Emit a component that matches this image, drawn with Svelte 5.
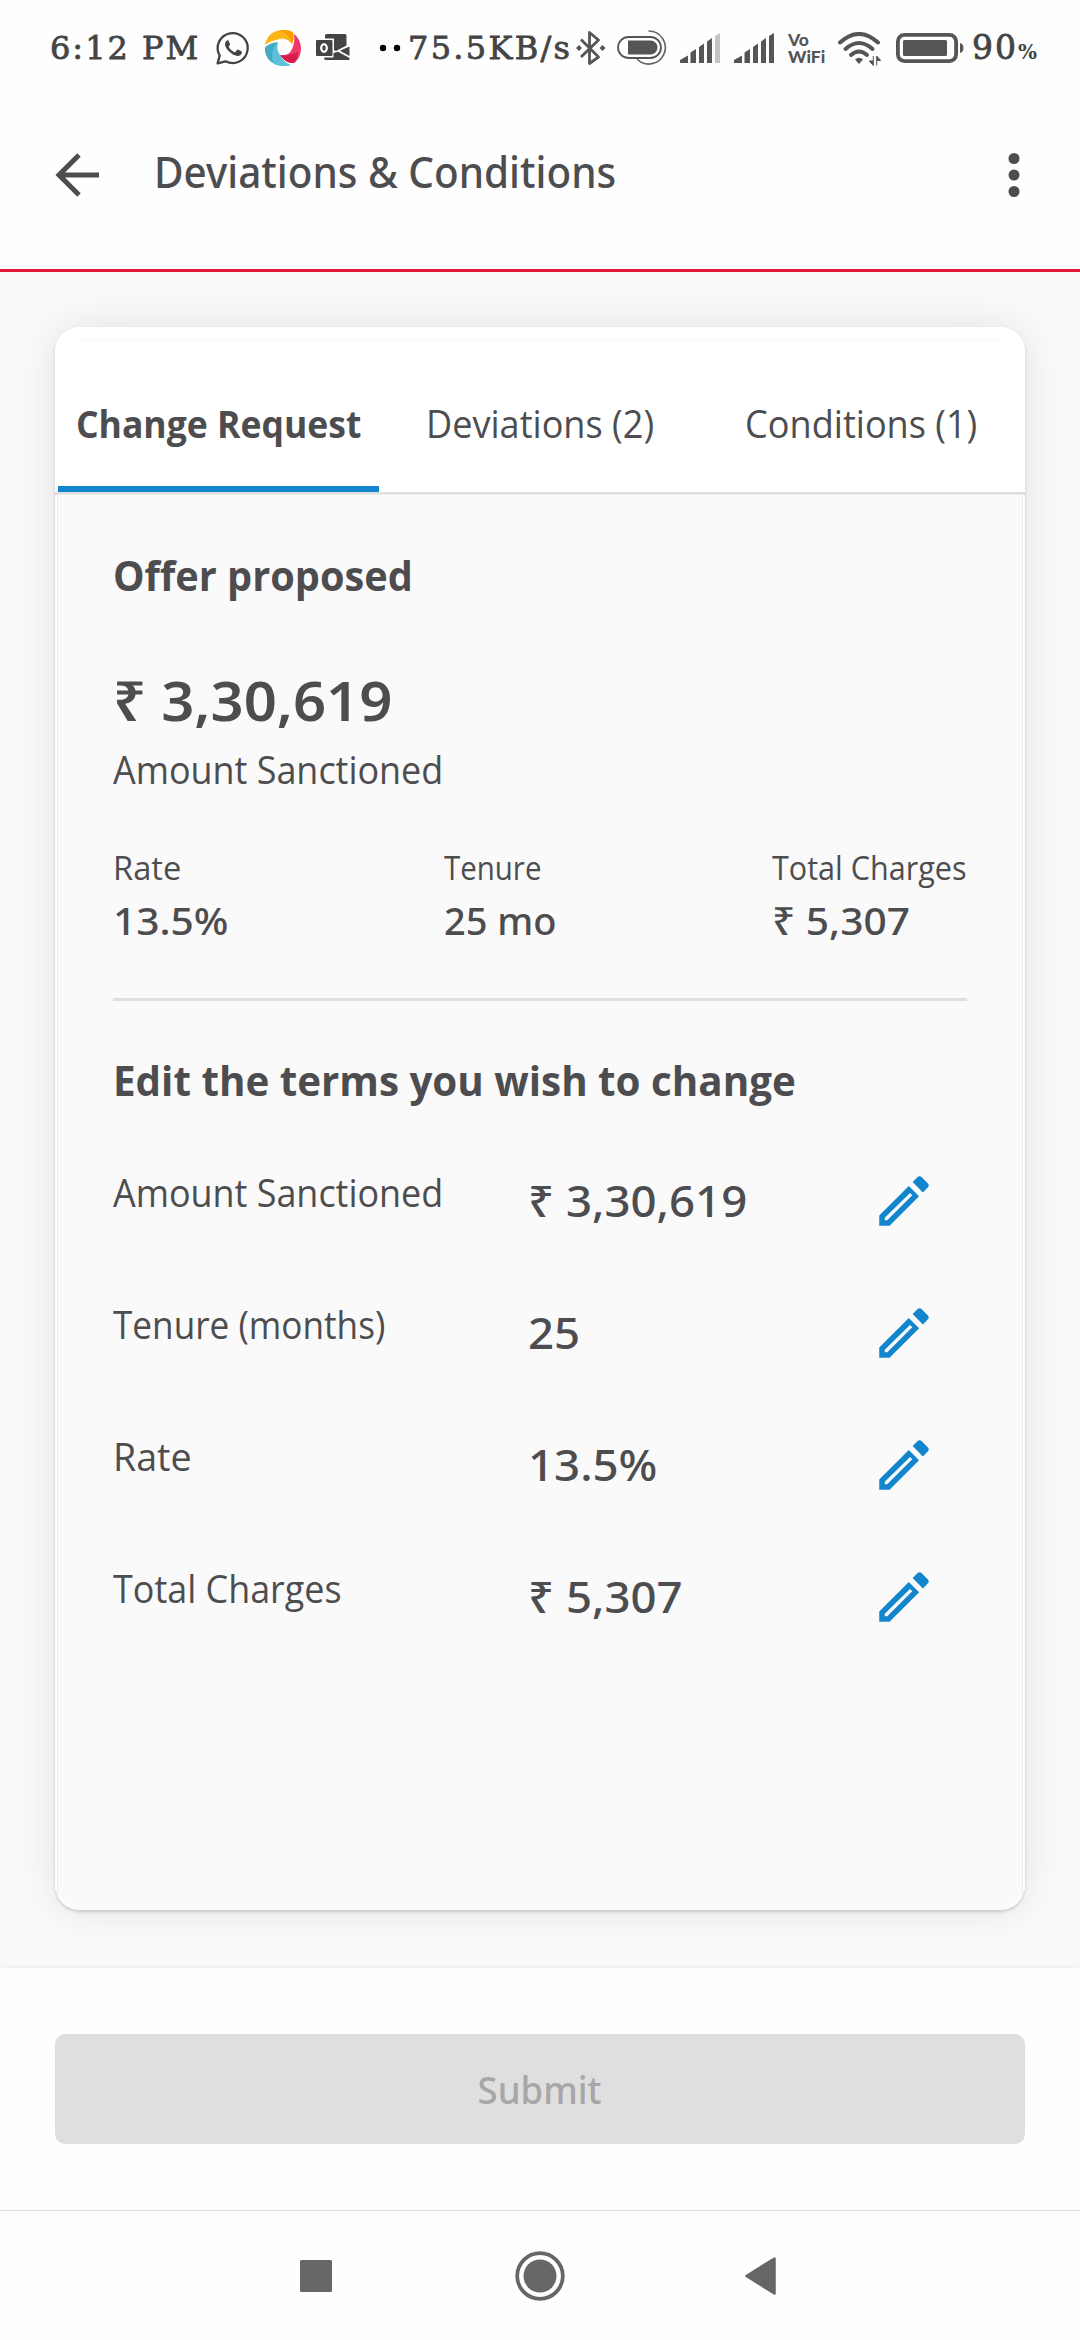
<script>
  const tabs = ['Change Request', 'Deviations (2)', 'Conditions (1)'];
  const summary = [
    { label: 'Rate', value: '13.5%', fit: 'open', kind: 'wide' },
    { label: 'Tenure', value: '25 mo', fit: 'tight', kind: '' },
    { label: 'Total Charges', value: '₹ 5,307', fit: '', kind: 'wide' }
  ];
  const terms = [
    { label: 'Amount Sanctioned', value: '₹ 3,30,619', fit: '' },
    { label: 'Tenure (months)', value: '25', fit: 'tight' },
    { label: 'Rate', value: '13.5%', fit: 'open' },
    { label: 'Total Charges', value: '₹ 5,307', fit: '' }
  ];
  let active = $state(0);
</script>

<div class="screen">
  <div class="status">
    <span class="clock">6:12 PM</span>
    <svg class="wa" viewBox="0 0 34 34" width="34" height="34">
      <path d="M1.6 32.4 3.7 24.6A15 15 0 1 1 9.6 30.3Z" fill="none" stroke="#444" stroke-width="2.3" stroke-linejoin="round" />
      <path d="M11.6 9.2c-.7 0-2.6 1.500-2.600 4 0 2.600 2 5.200 4.200 7.400 2.700 2.600 5.500 4.400 8.400 4.400 2.300 0 4.200-1.500 4.300-3.800 0-.6-.3-.8-3.600-2.400-.8-.4-1-.2-1.500.4l-1.400 1.700c-.4.400-.8.300-1.300.1-2.200-.9-4.100-2.700-5.200-4.900-.2-.5 0-.7.300-1.100.7-.8 1-1.200.8-1.900l-1.400-3.300c-.2-.5-.5-.6-1-.6Z" fill="#444" />
    </svg>
    <svg class="swirl" viewBox="0 0 36 36" width="36" height="36">
      <path d="M0 15C2 5 9 0 18 0c5 0 8 1 10 2.500 1 4 .5 8-1 11.500-3-4-7-6-12-5C9 10 4 12 0 15Z" fill="#fdb515" />
      <path d="M14 0h5c5 0 7 1 9 2.500 1 4 .5 8-1 11.500-1-5-5-11-13-14Z" fill="#fb9c00" />
      <path d="M29 4c5 4 7 9 7 15-.5 7-3 11-7 14-5 .5-10-2-14-8 6 1 10-1 12-6 2-5 3-9 2-15Z" fill="#f0386b" />
      <path d="M33 22c-5 3-12 4-18 3 4 6 9 8.500 14 8 3-3 4-6 4-11Z" fill="#d91a4c" />
      <path d="M0 17c3-3 8-5 13-4.500-1.500 6 0 10 3 14 2 4 5 6.500 10 8.500-4 1.500-11 1.500-16-.5C4 31 0 25 0 17Z" fill="#5cc0da" />
      <path d="M0 19c3-4 8-6.500 13-6.500C8 17 6 23 8 33 3 30 0 25 0 19Z" fill="#45a9c4" />
    </svg>
    <svg class="outlook" viewBox="0 0 34 27" width="34" height="27" fill="#444">
      <path d="M10.500 0H29q1.500 0 1.500 1.500V11.500L20 17l-2-1V4.500H9V1.500Q9 0 10.500 0Z" />
      <path d="M33.500 12.500V22L24 16.800ZM8 23.500h9.500V19L22 17.800 33.500 24v2H10q-2 0-2-2.500Z" />
      <rect y="6" width="16.500" height="16" rx="1" />
      <ellipse cx="8" cy="14" rx="2.800" ry="3.800" fill="none" stroke="#fff" stroke-width="2.200" />
    </svg>
    <svg class="dots" viewBox="0 0 22 8" width="22" height="8"><circle cx="4" cy="4" r="3.200" /><circle cx="18" cy="4" r="3.200" /></svg>
    <span class="speed">75.5KB/s</span>
    <svg class="bt" viewBox="0 0 30 34" width="30" height="34">
      <path d="M5 8.500 22.500 26 13.500 32.500V1.500L22.500 9 5 26" fill="none" stroke="#555" stroke-width="2.800" stroke-linejoin="round" />
      <path d="M3 14l3 3-3 3-3-3ZM26.500 14l3 3-3 3-3-3Z" fill="#555" />
    </svg>
    <svg class="pill" viewBox="0 0 50 35" width="50" height="35">
      <rect x="1" y="7" width="43" height="21" rx="10.500" fill="none" stroke="#555" stroke-width="1.800" />
      <path d="M11 10.500h22.500a7 7 0 0 1 0 14H11Z" fill="#555" />
      <path d="M31.500 1a16.500 16.500 0 1 1-11.500 28" fill="none" stroke="#666" stroke-width="1.700" />
    </svg>
    {#each [true, false] as weak}
      <svg class="signal" viewBox="0 0 40 30" width="40" height="30" fill="#555">
        <path d="M0 30v-3l8-4.500V30ZM10.500 30V19.500l5.500-3.500v14ZM19 30V14l5-3.500V30ZM27 30V8.500L32 5v25Z" />
        <path class:weak d="M35 30V3l5-3v30Z" />
      </svg>
    {/each}
    <div class="vowifi"><span>Vo</span><span>WiFi</span></div>
    <svg class="wifi" viewBox="0 0 43 34" width="43" height="34">
      <g fill="none" stroke="#555" stroke-width="4" stroke-linecap="round">
        <path d="M2 10.500Q21 -6.500 40 10.500" /><path d="M7.500 17Q21 5 34.500 17" /><path d="M13 23Q21 16 29 23" />
      </g>
      <path d="M17 27.500q4-3.500 8 0L21 32Z" fill="#555" />
      <path d="M35.300 24v9.500l-4-4.500h4M38.700 33.500V24l4 4.500h-4" fill="#555" stroke="#555" stroke-width="1" />
    </svg>
    <svg class="battery" viewBox="0 0 68 30" width="68" height="30">
      <rect x="1.900" y="1.900" width="58.200" height="26.200" rx="6.500" fill="none" stroke="#555" stroke-width="3.800" />
      <rect x="7" y="7" width="44" height="16" rx="1.500" fill="#555" />
      <path d="M64 10q3.500 1 3.500 5T64 20Z" fill="#555" />
    </svg>
    <span class="percent">90<small>%</small></span>
  </div>

  <header class="appbar">
    <svg class="back" viewBox="0 0 44 44" width="44" height="44" fill="none" stroke="#4d4d4f" stroke-width="5">
      <path d="M24 2 4 22l20 20M3.500 22H44" />
    </svg>
    <h1>Deviations &amp; Conditions</h1>
    <svg class="more" viewBox="0 0 12 44" width="12" height="44" fill="#4d4d4f">
      <circle cx="6" cy="5.500" r="5.500" /><circle cx="6" cy="22" r="5.500" /><circle cx="6" cy="38.500" r="5.500" />
    </svg>
  </header>

  <main>
    <section class="card">
      <div class="tabs">
        {#each tabs as tab, i}
          <button class="tab" class:active={active === i} onclick={() => (active = i)}><span>{tab}</span></button>
        {/each}
      </div>
      <div class="body">
        <h2>Offer proposed</h2>
        <div class="amount"><span>₹ 3,30,619</span></div>
        <div class="caption"><span>Amount Sanctioned</span></div>
        <div class="summary">
          {#each summary as s}
            <div>
              <div class="key"><span class={s.fit}>{s.label}</span></div>
              <div class="val"><span class={s.kind}>{s.value}</span></div>
            </div>
          {/each}
        </div>
        <hr />
        <h2 class="edit">Edit the terms you wish to change</h2>
        {#each terms as t}
          <div class="term">
            <div class="name"><span class={t.fit}>{t.label}</span></div>
            <div class="figure"><span>{t.value}</span></div>
            <svg viewBox="0 0 24 24" width="66" height="66" fill="#1286cd">
              <path fill-rule="evenodd" d="M3 17.250V21h3.750L17.500 10.250 13.750 6.500ZM5 18.100 14.200 9.100 15 9.900 5.900 19H5Z" />
              <path d="M20.710 7.040c.390-.390.390-1.020 0-1.410l-2.340-2.340c-.390-.390-1.020-.390-1.410 0L15.130 5.120l3.750 3.750Z" />
            </svg>
          </div>
        {/each}
      </div>
    </section>
  </main>

  <footer><button class="submit" disabled><span>Submit</span></button></footer>

  <nav>
    <svg viewBox="0 0 32 32" width="32" height="32"><rect width="32" height="32" rx="1.500" fill="#666" /></svg>
    <svg class="home" viewBox="0 0 50 50" width="50" height="50">
      <circle cx="25" cy="25" r="22.800" fill="none" stroke="#666" stroke-width="3.800" /><circle cx="25" cy="25" r="16.500" fill="#666" />
    </svg>
    <svg class="prev" viewBox="0 0 31 38" width="31" height="38">
      <path d="M29.500 1.500v35L1.500 19Z" fill="#666" stroke="#666" stroke-width="2.500" stroke-linejoin="round" />
    </svg>
  </nav>
</div>

<style>
  :global(body) { background: #fff; }
  .screen {
    width: 1080px; height: 2340px; display: flex; flex-direction: column; overflow: hidden;
    background: #fefefe; color: #4d4d4f; font-family: 'Open Sans', 'Noto Sans', sans-serif; white-space: nowrap;
  }
  svg { display: block; flex: none; }
  span { display: inline-block; }
  button { border: 0; padding: 0; background: none; color: inherit; font: inherit; }

  .status { height: 95px; display: flex; align-items: center; font-family: 'DejaVu Serif', serif; font-size: 32px; color: #444; }
  .status > * { flex: none; }
  .clock, .speed, .percent { -webkit-text-stroke: 0.8px #444; }
  .clock { width: 152px; margin-left: 50px; letter-spacing: 2px; }
  .wa { margin-left: 14px; }
  .swirl { margin-left: 15px; }
  .outlook { margin-left: 15px; }
  .dots { margin-left: 29px; fill: #000; }
  .speed { width: 165px; margin-left: 7px; letter-spacing: 2.300px; }
  .bt { margin-left: 3px; }
  .pill { margin-left: 11px; }
  .signal { margin-left: 13px; }
  .signal + .signal { margin-left: 14px; }
  .weak { fill: #c4c4c4; }
  .vowifi { width: 36px; margin-left: 14px; display: flex; flex-direction: column; font: 900 17.500px/17px 'Lato', sans-serif; color: #555; }
  .wifi { margin-left: 14px; margin-top: 3px; }
  .battery { margin-left: 15px; }
  .percent { margin-left: 8px; font-size: 33px; letter-spacing: 2px; }
  .percent small { font-size: 20px; font-weight: bold; -webkit-text-stroke: 0; }

  .appbar { height: 159px; padding: 0 60px 15px 55px; border-bottom: 3px solid #e31837; display: flex; align-items: center; }
  h1 {
    margin: 0 auto 5px 55px; font-family: 'Noto Sans', sans-serif; font-size: 43.400px; font-weight: 500;
    line-height: 60px; transform: scaleX(0.932); transform-origin: 0 50%;
  }

  main { height: 1583px; padding: 55px 55px 58px; background: #fafafa; }
  .card {
    box-sizing: border-box; height: 1583px; padding: 0 3px; border-radius: 25px; overflow: hidden; background: #fafafa;
    box-shadow: 0 2px 3px rgba(0, 0, 0, 0.16), 0 0 44px rgba(0, 0, 0, 0.1), inset 3px 0 #fdfdfd, inset -3px 0 #fdfdfd;
  }
  .tabs {
    height: 165px; margin: 0 -3px; padding: 0 3px; display: flex; border-bottom: 3px solid #dfdfdf;
    background: #fff linear-gradient(#f8f8f8, #f8f8f8) 50% 13px / 930px 1px no-repeat;
  }
  .tab { flex: 1; box-sizing: border-box; padding-top: 32px; border-bottom: 6px solid transparent; font-size: 38px; }
  .tab span { transform: scaleX(0.950); }
  .tab.active { border-color: #1286cd; font-weight: 700; }
  .tab.active span { transform: scaleX(0.935); }

  .body { height: 1415px; padding: 50px 55px 0; box-sizing: border-box; box-shadow: 0 0 0 1px #ececec; }
  .body span, h2 { transform-origin: 0 50%; }
  h2 { margin: 0; font-size: 42px; font-weight: 700; line-height: 60px; transform: scaleX(0.945); }
  .amount { margin-top: 65px; font: 600 54px/60px 'Noto Sans', sans-serif; }
  .amount span { transform: scaleX(1.073); }
  .caption { margin-top: 14px; font-size: 38px; line-height: 50px; }
  .caption span { transform: scaleX(0.945); }
  .summary { margin-top: 52px; display: grid; grid-template-columns: 331px 328px auto; }
  .key { font-size: 32px; line-height: 44px; }
  .key span { transform: scaleX(0.955); }
  .key .open { transform: scaleX(1.020); }
  .key .tight { transform: scaleX(0.920); }
  .val { margin-top: 5px; font: 500 38px/50px 'Noto Sans', sans-serif; }
  .val .wide { transform: scaleX(1.070); }
  hr { height: 3px; margin: 53px 0 49px; border: 0; background: #dfdfdf; }
  .edit { margin-bottom: 25px; transform: scaleX(0.960); }
  .term { height: 132px; display: grid; grid-template-columns: 415px 343px 66px; align-items: center; }
  .name { padding-bottom: 18px; font-size: 38px; line-height: 50px; }
  .name span { transform: scaleX(0.945); }
  .name .open { transform: scaleX(0.990); }
  .name .tight { transform: scaleX(0.925); }
  .figure { font: 500 43px/60px 'Noto Sans', sans-serif; }
  .figure span { transform: scaleX(1.060); }

  footer { position: relative; height: 176px; padding: 66px 55px 0; background: #fefefe; box-shadow: 0 0 6px rgba(0, 0, 0, 0.08); }
  .submit {
    width: 970px; height: 110px; border-radius: 10px; background: #dfdfdf; color: #a7a7a7;
    font: 500 38px/110px 'Noto Sans', sans-serif;
  }
  .submit span { transform: scaleX(0.960); }

  nav { position: relative; height: 129px; border-top: 1px solid #dfdfdf; background: #fefefe; display: flex; align-items: center; padding-left: 300px; }
  .home { margin-left: 183px; }
  .prev { margin-left: 180px; }
</style>
